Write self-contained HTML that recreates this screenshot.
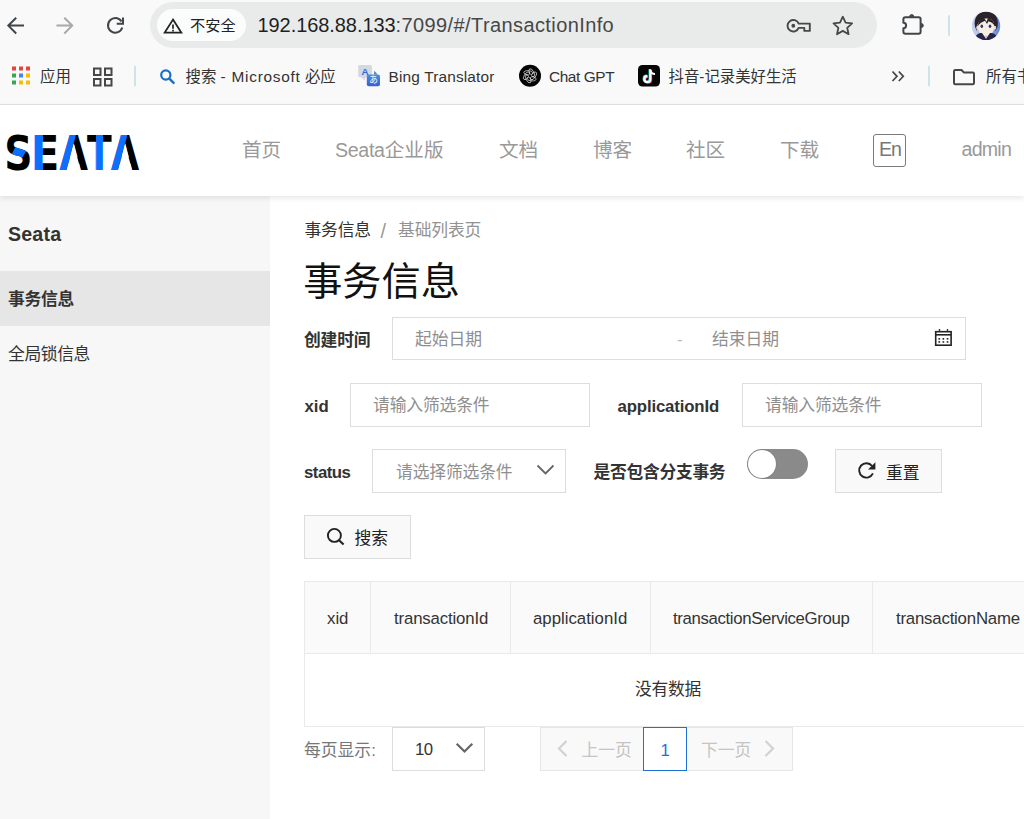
<!DOCTYPE html>
<html lang="zh-CN">
<head>
<meta charset="utf-8">
<title>Seata</title>
<style>
*{box-sizing:border-box;margin:0;padding:0}
html,body{width:1024px;height:819px;overflow:hidden;background:#fff}
body{font-family:"Liberation Sans","Noto Sans CJK SC",sans-serif;color:#333;position:relative}
.abs{position:absolute;white-space:nowrap}
.t{position:absolute;white-space:nowrap;line-height:1;}
/* browser chrome */
#chrome{position:absolute;left:0;top:0;width:1024px;height:105px;background:#f9f9f9;border-bottom:1px solid #e2e2e2}
#omni{position:absolute;left:150px;top:2px;width:727px;height:46px;border-radius:23px;background:#e9ebea}
#chip{position:absolute;left:157px;top:9px;width:89px;height:32px;border-radius:16px;background:#fbfcfc}
/* header */
#header{position:absolute;left:0;top:105px;width:1024px;height:91px;background:#fff;box-shadow:0 2px 6px rgba(0,0,0,.10);z-index:5}
.nav{color:#999;font-size:19.6px}
/* sidebar */
#side{position:absolute;left:0;top:196px;width:270px;height:623px;background:#f7f7f7}
#sel{position:absolute;left:0;top:271px;width:270px;height:55px;background:#e6e6e6}
/* content */
.lbl{font-weight:bold;font-size:16.8px;color:#333}
.box{position:absolute;border:1px solid #ddd;background:#fff}
.ph{color:#8f8f8f;font-size:16.8px}
.btn{position:absolute;border:1px solid #ddd;background:#f9f9f9}
.th{font-size:16.8px;color:#333}
.bk{font-size:15.4px;color:#333}
</style>
</head>
<body>
<!-- ===== browser chrome ===== -->
<div id="chrome"></div>
<div id="omni"></div>
<div id="chip"></div>
<svg class="abs" style="left:0;top:0" width="1024" height="105" viewBox="0 0 1024 105" fill="none">
  <!-- back -->
  <path d="M24 25.600H9M16.200 17.700L8.300 25.600L16.200 33.500" stroke="#41464a" stroke-width="2"/>
  <!-- forward -->
  <path d="M56.500 25.600H71.500M64.300 17.700L72.200 25.600L64.300 33.500" stroke="#a6a8a9" stroke-width="2"/>
  <!-- reload -->
  <path d="M121.500 21.500A7.300 7.300 0 1 0 122.300 27.500" stroke="#41464a" stroke-width="2"/>
  <path d="M123 17.500V23.800H116.700" stroke="#41464a" stroke-width="2"/>
  <!-- warning -->
  <path d="M173 19.600L181.300 32.600H164.700Z" stroke="#222" stroke-width="1.800" stroke-linejoin="miter"/>
  <path d="M173 24.500V28.800M173 29.800V31.400" stroke="#222" stroke-width="1.700"/>
</svg>
<div id="t1" class="t" style="left:190px;top:18px;font-size:15.2px;color:#222">不安全</div>
<div id="t2" class="t" style="left:257.5px;top:15px;font-size:20px;color:#1f1f1f;letter-spacing:-.07px">192.168.88.133<span style="color:#474747;letter-spacing:.4px">:7099/#/TransactionInfo</span></div>


<!-- address-bar right icons + toolbar -->
<svg class="abs" style="left:760px;top:0" width="264" height="105" viewBox="760 0 264 105" fill="none">
  <defs>
    <linearGradient id="avbg" x1="0" x2="1" y1="0" y2="0"><stop offset="0" stop-color="#c9d6f0"/><stop offset=".45" stop-color="#9db3e6"/><stop offset="1" stop-color="#6285d4"/></linearGradient>
    <clipPath id="avc"><circle cx="986" cy="25.900" r="14.200"/></clipPath>
  </defs>
  <!-- key -->
  <path d="M798.700 23.600H809.800V30.900H804.300V27.900H798.700A5.800 5.800 0 1 1 798.700 23.600Z" stroke="#474747" stroke-width="1.900" stroke-linejoin="round"/>
  <circle cx="793.300" cy="25.750" r="1.900" fill="#474747"/>
  <!-- star -->
  <path d="M842.800 16.700L845.600 22.700L852.100 23.400L847.200 27.800L848.600 34.200L842.800 30.900L837 34.200L838.400 27.800L833.500 23.400L840 22.700Z" stroke="#474747" stroke-width="1.800" stroke-linejoin="round"/>
  <!-- extension puzzle -->
  <path d="M905.400 17.300H918.600A2 2 0 0 1 920.600 19.300V31.700A2 2 0 0 1 918.600 33.700H905.400A2 2 0 0 1 903.400 31.700V28.200A2.700 2.700 0 0 0 903.400 22.800V19.300A2 2 0 0 1 905.400 17.300Z" stroke="#3f4549" stroke-width="2" stroke-linejoin="round"/>
  <path d="M909.600 16.600A2.100 2.100 0 0 1 913.800 16.600ZM921.300 23.400A2.100 2.100 0 0 1 921.300 27.600Z" fill="#3f4549" stroke="#3f4549" stroke-width=".800"/>
  <!-- separators -->
  <rect x="948" y="15" width="2" height="21" rx="1" fill="#cfe3ea"/>
  <rect x="928" y="65.500" width="2" height="21" rx="1" fill="#cfe3ea"/>
  <!-- avatar -->
  <g clip-path="url(#avc)">
    <rect x="971" y="11" width="30" height="30" fill="url(#avbg)"/>
    <path d="M975 27C973 17 979 11.500 986 11.500C994 11.500 999.500 17 997.500 27L995.500 31L994 24L977.500 24L977 31Z" fill="#2b2329"/>
    <ellipse cx="977.600" cy="27.800" rx="1.400" ry="2" fill="#eed9cc"/><ellipse cx="994.800" cy="27.800" rx="1.400" ry="2" fill="#eed9cc"/>
    <path d="M978.500 24C978.500 20 982 18.500 986 18.500C990 18.500 994 20 994 24V29C993 33 989 38 986 38.700C983 38 979 33 978.500 29Z" fill="#f6eee3"/>
    <path d="M977.500 26L979.500 20L984 17.500L986.500 21.800L988 18L993 20.500L995 26L992 22.700L988.500 21.200L987 24L985 20.700L981 22.700Z" fill="#2b2329"/>
    <ellipse cx="981.800" cy="26.200" rx="1.300" ry="1.700" fill="#2d3566"/><ellipse cx="990" cy="26.200" rx="1.300" ry="1.700" fill="#2d3566"/>
    <path d="M973 41C974.500 35.500 979 32.300 982 33L986 38.700L990 33C993.500 32.300 998 35.500 999.500 41Z" fill="#27244a"/>
    <path d="M984.800 35.800L986 38.700L987.200 35.800Z" fill="#e9a9a0"/>
  </g>
  <!-- chevrons >> -->
  <path d="M892.500 71.500L897 76.300L892.500 81M898.800 71.500L903.300 76.300L898.800 81" stroke="#474747" stroke-width="1.700"/>
  <!-- folder -->
  <path d="M954 71.200A1.200 1.200 0 0 1 955.200 70H961.500L964 72.600H972.800A1.200 1.200 0 0 1 974 73.800V83A1.200 1.200 0 0 1 972.800 84.200H955.200A1.200 1.200 0 0 1 954 83Z" stroke="#474747" stroke-width="2" stroke-linejoin="round"/>
</svg>
<div id="t3" class="t bk" style="left:986px;top:69px">所有书签</div>

<!-- bookmarks bar left -->
<svg class="abs" style="left:0;top:55px" width="760" height="50" viewBox="0 55 760 50" fill="none">
  <!-- apps grid -->
  <g>
    <rect x="12" y="66.500" width="4" height="4" fill="#ea4335"/><rect x="19" y="66.500" width="4" height="4" fill="#ea4335"/><rect x="26" y="66.500" width="4" height="4" fill="#ea4335"/>
    <rect x="12" y="73.500" width="4" height="4" fill="#34a853"/><rect x="19" y="73.500" width="4" height="4" fill="#4285f4"/><rect x="26" y="73.500" width="4" height="4" fill="#fbbc05"/>
    <rect x="12" y="80.500" width="4" height="4" fill="#34a853"/><rect x="19" y="80.500" width="4" height="4" fill="#fbbc05"/><rect x="26" y="80.500" width="4" height="4" fill="#fbbc05"/>
  </g>
  <!-- tab grid -->
  <g stroke="#474747" stroke-width="2">
    <rect x="94" y="68.500" width="6.500" height="6.500"/><rect x="105" y="68.500" width="6.500" height="6.500"/>
    <rect x="94" y="79" width="6.500" height="6.500"/><rect x="105" y="79" width="6.500" height="6.500"/>
  </g>
  <rect x="134" y="65.500" width="2" height="21" rx="1" fill="#cfe3ea"/>
  <!-- search -->
  <circle cx="165.800" cy="75" r="4.600" stroke="#1a6fc4" stroke-width="2.200"/>
  <path d="M169.300 78.600L173.600 82.900" stroke="#1a6fc4" stroke-width="2.400" stroke-linecap="round"/>
  <!-- bing translator -->
  <defs><linearGradient id="bgb" x1="0" x2="0" y1="0" y2="1"><stop offset="0" stop-color="#4b8fd8"/><stop offset="1" stop-color="#3a5ed2"/></linearGradient></defs>
  <rect x="358.200" y="65" width="13.800" height="12.300" rx="1.500" fill="#d3d9e3"/>
  <path d="M361 77L365.500 77L364.500 80.500Z" fill="#d3d9e3"/>
  <path d="M373.800 74.600L374.400 70.700L377.600 74.600Z" fill="#4a86c6"/>
  <rect x="366.800" y="74.400" width="13.200" height="11.800" rx="2" fill="url(#bgb)"/>
  <!-- chatgpt -->
  <circle cx="530" cy="75.800" r="11" fill="#050505"/>
  <g stroke="#e6e6e6" stroke-width=".700" fill="none">
    <ellipse cx="533.50" cy="75.80" rx="2.100" ry="4.400" transform="rotate(32 533.50 75.80)"/>
    <ellipse cx="531.75" cy="78.83" rx="2.100" ry="4.400" transform="rotate(92 531.75 78.83)"/>
    <ellipse cx="528.25" cy="78.83" rx="2.100" ry="4.400" transform="rotate(152 528.25 78.83)"/>
    <ellipse cx="526.50" cy="75.80" rx="2.100" ry="4.400" transform="rotate(212 526.50 75.80)"/>
    <ellipse cx="528.25" cy="72.77" rx="2.100" ry="4.400" transform="rotate(272 528.25 72.77)"/>
    <ellipse cx="531.75" cy="72.77" rx="2.100" ry="4.400" transform="rotate(332 531.75 72.77)"/>
  </g>
  <circle cx="530" cy="75.800" r="1.500" fill="#050505"/>
  <!-- tiktok -->
  <rect x="638" y="65" width="22" height="21.500" rx="4.500" fill="#050505"/>
  <path d="M650.400 69.500V79.200A3 3 0 1 1 647.400 76.200" stroke="#25f4ee" stroke-width="2.200" transform="translate(-.7 -.5)"/>
  <path d="M650.400 69.500V79.200A3 3 0 1 1 647.400 76.200" stroke="#fe2c55" stroke-width="2.200" transform="translate(.7 .5)"/>
  <path d="M650.400 69.500V79.200A3 3 0 1 1 647.400 76.200M650.400 70A4.500 4.500 0 0 0 655 74" stroke="#fff" stroke-width="2.200"/>
</svg>
<div id="t4" class="t" style="left:361.600px;top:66.800px;font-size:9.800px;font-weight:bold;color:#3767d8">A</div>
<div id="t5" class="t" style="left:369.200px;top:76.200px;font-size:8.600px;color:#fff;font-family:'Liberation Sans','Noto Sans CJK JP',sans-serif">あ</div>
<div id="t6" class="t bk" style="left:40px;top:69px">应用</div>
<div class="t bk" id="bk1" style="left:185.500px;top:69px">搜索 <span style="letter-spacing:.75px">- Microsoft</span> 必应</div>
<div class="t bk" id="bk2" style="letter-spacing:.17px;left:388.500px;top:69px">Bing Translator</div>
<div class="t bk" id="bk3" style="letter-spacing:-.4px;left:549px;top:69px">Chat GPT</div>
<div class="t bk" id="bk4" style="left:668.500px;top:69px">抖音-记录美好生活</div>

<!-- ===== header ===== -->
<div id="header"></div>


<!-- logo -->
<svg class="abs" style="left:0;top:125px;z-index:6" width="150" height="55" viewBox="0 125 150 55">
  <defs>
    <linearGradient id="gE" x1="0" x2="1" y1="0" y2="0"><stop offset="0.41" stop-color="#0b70ff"/><stop offset="0.41" stop-color="#000"/></linearGradient>
    <linearGradient id="gT" x1="0" x2="1" y1="0" y2="0"><stop offset="0.362" stop-color="#000"/><stop offset="0.362" stop-color="#0b70ff"/><stop offset="0.638" stop-color="#0b70ff"/><stop offset="0.638" stop-color="#000"/></linearGradient>
    <clipPath id="cS"><polygon points="16,145.700 26.100,151.300 21.100,159.700 11.800,154.100"/></clipPath>
    <clipPath id="cA1"><polygon points="50,172 50,130 77.250,130 66.080,172"/></clipPath>
    <clipPath id="cA2"><polygon points="100,172 100,130 128.670,130 117.600,172"/></clipPath>
  </defs>
  <g font-family="DejaVu Sans Condensed, Liberation Sans, sans-serif" font-weight="bold" font-size="48">
    <text transform="translate(4.300 170.300) scale(0.910 1)" fill="#000">S</text>
    <g clip-path="url(#cS)"><text transform="translate(4.300 170.300) scale(0.910 1)" fill="#0b70ff">S</text></g>
    <text transform="translate(30.800 170.300) scale(0.970 1)" fill="url(#gE)">E</text>
    <text transform="translate(59.400 170.300) scale(0.852 1)" fill="#000">A</text>
    <g clip-path="url(#cA1)"><text transform="translate(59.400 170.300) scale(0.852 1)" fill="#0b70ff">A</text></g>
    <text transform="translate(87 170.300) scale(0.838 1)" fill="url(#gT)">T</text>
    <text transform="translate(111 170.300) scale(0.843 1)" fill="#000">A</text>
    <g clip-path="url(#cA2)"><text transform="translate(111 170.300) scale(0.843 1)" fill="#0b70ff">A</text></g>
  </g>
  <polygon points="73.660,143.510 80.750,170.800 66.530,170.800" fill="#fff"/>
  <polygon points="125.110,143.510 132.120,170.800 118.050,170.800" fill="#fff"/>
</svg>
<!-- nav -->
<div id="t7" class="t nav" style="left:242px;top:141px;z-index:6">首页</div>
<div class="t nav" id="nv2" style="left:335px;top:141px;z-index:6"><span style="letter-spacing:-.3px">Seata</span>企业版</div>
<div id="t8" class="t nav" style="left:499px;top:141px;z-index:6">文档</div>
<div id="t9" class="t nav" style="left:593px;top:141px;z-index:6">博客</div>
<div id="t10" class="t nav" style="left:686px;top:141px;z-index:6">社区</div>
<div id="t11" class="t nav" style="left:780px;top:141px;z-index:6">下载</div>
<div class="abs" style="left:873px;top:134px;width:33px;height:33px;border:1px solid #7a7a7a;border-radius:3px;z-index:6"></div>
<div class="t" id="en" style="left:879px;top:140px;font-size:19.6px;color:#777;font-weight:normal;z-index:6;letter-spacing:-1px">En</div>
<div class="t nav" id="adm" style="left:961.500px;top:140px;z-index:6;letter-spacing:-0.75px">admin</div>

<!-- ===== sidebar ===== -->
<div id="side"></div>
<div id="sel"></div>
<div id="t12" class="t" style="left:8px;top:225px;font-size:19.6px;font-weight:bold;color:#333;letter-spacing:.2px">Seata</div>
<div id="t13" class="t" style="left:8px;top:292px;font-size:16.8px;font-weight:bold;color:#333;letter-spacing:-.3px">事务信息</div>
<div id="t14" class="t" style="left:8px;top:347px;font-size:16.8px;color:#333;letter-spacing:-.4px">全局锁信息</div>


<!-- ===== content ===== -->
<div id="t15" class="t" style="left:304.500px;top:223px;font-size:16.800px;color:#333;letter-spacing:-.2px">事务信息</div>
<div id="t15s" class="t" style="left:380.500px;top:222px;font-size:19.800px;color:#999">/</div>
<div id="t15b" class="t" style="left:398px;top:223px;font-size:16.800px;color:#929292;letter-spacing:-.15px">基础列表页</div>
<div id="t16" class="t" style="left:303.200px;top:262px;font-size:39.200px;color:#111">事务信息</div>

<!-- row 1 -->
<div id="t17" class="t lbl" style="left:304px;top:333px;letter-spacing:-.2px">创建时间</div>
<div class="box" style="left:392px;top:317px;width:574px;height:43px"></div>
<div id="t18" class="t ph" style="left:415px;top:332px">起始日期</div>
<div id="t19" class="t ph" style="left:677px;top:332px;color:#bbb">-</div>
<div id="t20" class="t ph" style="left:712px;top:332px">结束日期</div>
<svg class="abs" style="left:930px;top:325px" width="26" height="26" viewBox="930 325 26 26" fill="none">
  <rect x="935.700" y="331.700" width="15.400" height="13.500" stroke="#222" stroke-width="1.600"/>
  <path d="M935.700 334.800H951.100" stroke="#222" stroke-width="1.600"/>
  <path d="M939.500 329V331.500M947.500 329V331.500" stroke="#333" stroke-width="1.400"/>
  <g fill="#333"><rect x="938.400" y="338" width="1.700" height="1.700"/><rect x="942.500" y="338" width="1.700" height="1.700"/><rect x="946.700" y="338" width="1.700" height="1.700"/>
  <rect x="938.400" y="341.100" width="1.700" height="1.700"/><rect x="942.500" y="341.100" width="1.700" height="1.700"/><rect x="946.700" y="341.100" width="1.700" height="1.700"/></g>
</svg>

<!-- row 2 -->
<div class="t lbl" id="l_xid" style="left:304.500px;top:398.500px">xid</div>
<div class="box" style="left:350px;top:383px;width:240px;height:44px"></div>
<div id="t21" class="t ph" style="left:373px;top:397.5px;letter-spacing:-.15px">请输入筛选条件</div>
<div class="t lbl" id="l_app" style="left:617.5px;top:398.5px;letter-spacing:-.15px">applicationId</div>
<div class="box" style="left:742px;top:383px;width:240px;height:44px"></div>
<div id="t22" class="t ph" style="left:765px;top:397.5px;letter-spacing:-.15px">请输入筛选条件</div>

<!-- row 3 -->
<div class="t lbl" id="l_st" style="left:304px;top:464.500px;letter-spacing:-.5px">status</div>
<div class="box" style="left:372px;top:449px;width:194px;height:44px"></div>
<div id="t23" class="t ph" style="left:396px;top:464.5px;letter-spacing:-.15px">请选择筛选条件</div>
<svg class="abs" style="left:535px;top:461px" width="22" height="18" viewBox="0 0 22 18" fill="none"><path d="M2.500 4.500L10.500 12.500L18.500 4.500" stroke="#666" stroke-width="1.800"/></svg>
<div id="t24" class="t lbl" style="left:593.5px;top:465px;letter-spacing:-.3px">是否包含分支事务</div>
<div class="abs" style="left:747px;top:449px;width:61px;height:30px;border-radius:15px;background:#8a8a8a"></div>
<div class="abs" style="left:748px;top:450px;width:28px;height:28px;border-radius:14px;background:#fff;box-shadow:0 0 1px rgba(0,0,0,.4)"></div>
<div class="btn" style="left:835px;top:449px;width:107px;height:44px"></div>
<svg class="abs" style="left:852px;top:456px" width="30" height="30" viewBox="852 456 30 30" fill="none">
  <path d="M872.070 465.970A7.200 7.200 0 1 0 872.930 473.440" stroke="#222" stroke-width="1.900"/>
  <path d="M875.400 462.200V469.600H868Z" fill="#222"/>
</svg>
<div id="t25" class="t" style="left:886px;top:465.5px;font-size:16.800px;color:#222">重置</div>

<!-- row 4 -->
<div class="btn" style="left:304px;top:515px;width:107px;height:44px"></div>
<svg class="abs" style="left:320px;top:522px" width="30" height="30" viewBox="320 522 30 30" fill="none">
  <circle cx="334.400" cy="535.400" r="6.500" stroke="#222" stroke-width="1.900"/>
  <path d="M339 540.200L343.600 544.600" stroke="#222" stroke-width="2.100"/>
</svg>
<div id="t26" class="t" style="left:354.5px;top:531px;font-size:16.800px;color:#222">搜索</div>

<!-- table -->
<div class="abs" style="left:304px;top:581px;width:730px;height:146px;border:1px solid #e9e9e9;background:#fff"></div>
<div class="abs" style="left:305px;top:582px;width:729px;height:72px;background:#fafafa;border-bottom:1px solid #e9e9e9"></div>
<div class="abs" style="left:370px;top:582px;width:1px;height:71px;background:#e9e9e9"></div>
<div class="abs" style="left:510px;top:582px;width:1px;height:71px;background:#e9e9e9"></div>
<div class="abs" style="left:650px;top:582px;width:1px;height:71px;background:#e9e9e9"></div>
<div class="abs" style="left:872px;top:582px;width:1px;height:71px;background:#e9e9e9"></div>
<div class="t th" id="th1" style="left:327px;top:610.5px">xid</div>
<div class="t th" id="th2" style="left:394px;top:610.5px;letter-spacing:-.15px">transactionId</div>
<div class="t th" id="th3" style="left:533px;top:610.5px">applicationId</div>
<div class="t th" id="th4" style="left:673px;top:610.5px;letter-spacing:-.36px">transactionServiceGroup</div>
<div class="t th" id="th5" style="left:896px;top:610.5px;letter-spacing:-.2px">transactionName</div>
<div id="t27" class="t th" style="left:635px;top:682px;letter-spacing:-.3px">没有数据</div>

<!-- pagination -->
<div id="t28" class="t" style="left:304px;top:742.5px;font-size:16.800px;color:#777">每页显示:</div>
<div class="box" style="left:392px;top:727px;width:93px;height:44px"></div>
<div class="t" id="pg10" style="left:415px;top:742px;font-size:16.800px;color:#333;letter-spacing:-.5px">10</div>
<svg class="abs" style="left:454px;top:739px" width="22" height="18" viewBox="0 0 22 18" fill="none"><path d="M2.700 4.700L10.500 12.500L18.300 4.700" stroke="#666" stroke-width="2.200"/></svg>
<div class="abs" style="left:540px;top:727px;width:253px;height:44px;border:1px solid #e6e6e6;background:#f9f9f9"></div>
<div class="abs" style="left:643px;top:727px;width:44px;height:44px;border:1px solid #1d72d8;background:#fff"></div>
<svg class="abs" style="left:555px;top:738px" width="16" height="22" viewBox="0 0 16 22" fill="none"><path d="M11.500 3L4 10.500L11.500 18" stroke="#d2d2d2" stroke-width="2.200"/></svg>
<div id="t29" class="t" style="left:581.5px;top:743px;font-size:16.800px;color:#c4c4c4">上一页</div>
<div id="t30" class="t" style="left:660.5px;top:743px;font-size:16.800px;color:#1d72d8">1</div>
<div id="t31" class="t" style="left:701px;top:743px;font-size:16.800px;color:#c4c4c4">下一页</div>
<svg class="abs" style="left:761px;top:738px" width="16" height="22" viewBox="0 0 16 22" fill="none"><path d="M4.500 3L12 10.500L4.500 18" stroke="#d2d2d2" stroke-width="2.200"/></svg>

</body>
</html>
